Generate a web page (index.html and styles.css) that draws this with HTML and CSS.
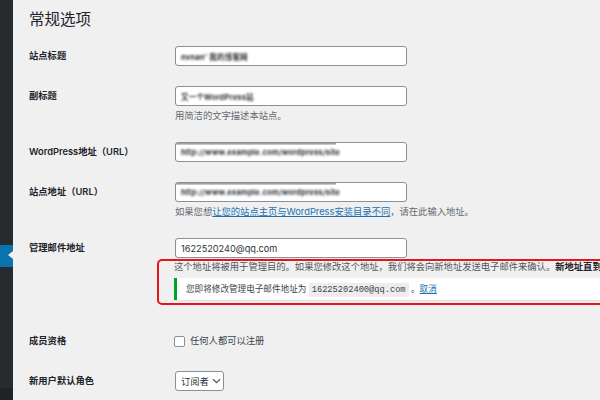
FILE: index.html
```html
<!DOCTYPE html>
<html lang="zh-CN">
<head>
<meta charset="utf-8">
<title>常规选项</title>
<link rel="stylesheet" href="styles.css">
</head>
<body>
<aside class="sidebar">
  <div class="side-top"></div>
  <div class="side-active"></div>
  <div class="side-mid"></div>
  <div class="side-bottom"></div>
</aside>
<main class="main">
  <h1 class="title">常规选项</h1>
  <div class="form">
    <div class="row">
      <div class="label">站点标题</div>
      <div class="field">
        <div class="input"><span class="blur">nvnan' 我的博客网</span></div>
      </div>
    </div>
    <div class="row">
      <div class="label">副标题</div>
      <div class="field">
        <div class="input"><span class="blur">又一个WordPress站</span></div>
        <p class="desc">用简洁的文字描述本站点。</p>
      </div>
    </div>
    <div class="row">
      <div class="label">WordPress地址（URL）</div>
      <div class="field">
        <div class="input input-url"><span class="blur">http://www.example.com/wordpress/site</span></div>
      </div>
    </div>
    <div class="row">
      <div class="label">站点地址（URL）</div>
      <div class="field">
        <div class="input input-url"><span class="blur">http://www.example.com/wordpress/site</span></div>
        <p class="desc">如果您想<a class="link" href="#">让您的站点主页与WordPress安装目录不同</a>，请在此输入地址。</p>
      </div>
    </div>
    <div class="row">
      <div class="label">管理邮件地址</div>
      <div class="field">
        <div class="input"><span class="value">1622520240@qq.com</span></div>
        <div class="highlight">
          <p class="desc desc-line">这个地址将被用于管理目的。如果您修改这个地址，我们将会向新地址发送电子邮件来确认。<strong>新地址直到获得确认后才会生效。</strong></p>
          <div class="notice">您即将修改管理电子邮件地址为 <code class="code">16225202400@qq.com</code> 。<a class="link" href="#">取消</a></div>
        </div>
      </div>
    </div>
    <div class="row row-check">
      <div class="label">成员资格</div>
      <div class="field">
        <label class="check"><span class="checkbox"></span>任何人都可以注册</label>
      </div>
    </div>
    <div class="row">
      <div class="label">新用户默认角色</div>
      <div class="field">
        <div class="select"><span class="select-text">订阅者</span><svg class="chev" width="9" height="6" viewBox="0 0 9 6"><path d="M1 1.2 L4.5 4.6 L8 1.2" fill="none" stroke="#50575e" stroke-width="1.2"/></svg></div>
      </div>
    </div>
  </div>
</main>
</body>
</html>
```
FILE: styles.css
```css
html, body {
  margin: 0;
  padding: 0;
  width: 600px;
  height: 400px;
  overflow: hidden;
}
body {
  display: flex;
  background: #f0f0f1;
  font-family: "Inter", "Noto Sans CJK SC", sans-serif;
  color: #1d2327;
}
.sidebar {
  width: 13px;
  flex: none;
  display: flex;
  flex-direction: column;
  background: #262b30;
}
.side-top { height: 245px; }
.side-active {
  height: 22px;
  background: #0a73b0;
  position: relative;
}
.side-active::after {
  content: "";
  position: absolute;
  right: 0;
  top: 6px;
  border-style: solid;
  border-width: 4.5px 5px 4.5px 0;
  border-color: transparent #f0f0f1 transparent transparent;
}
.side-mid { height: 121px; }
.side-bottom { flex: 1; background: #1f2327; }
.main {
  flex: 1;
  min-width: 0;
  padding: 9px 0 0 16px;
}
.title {
  margin: 0;
  font-size: 15.5px;
  line-height: 21px;
  font-weight: 400;
  color: #1d2327;
}
.form {
  margin-top: 6px;
}
.row {
  display: flex;
  padding: 10px 0;
}
.label {
  width: 146px;
  flex: none;
  font-size: 9.3px;
  line-height: 20px;
  font-weight: 600;
  color: #1d2327;
  white-space: nowrap;
}
.field {
  flex: 1;
  min-width: 0;
}
.input {
  box-sizing: border-box;
  width: 232px;
  height: 20px;
  border: 1px solid #8c8f94;
  border-radius: 3px;
  background: #fff;
  padding: 0 5px;
  display: flex;
  align-items: center;
  overflow: hidden;
}
.input-url {
  background-image: linear-gradient(#8d9196, #d6d8da);
  background-size: 160px 2px;
  background-repeat: no-repeat;
  background-position: left top;
}
.blur {
  display: inline-block;
  font-size: 7.5px;
  font-weight: 700;
  color: #2a2e33;
  filter: blur(0.9px);
  letter-spacing: 0.2px;
  white-space: nowrap;
}
.value {
  font-size: 9.2px;
  color: #2c3338;
  white-space: nowrap;
}
.desc {
  margin: 4px 0 0;
  font-size: 9.3px;
  line-height: 12px;
  color: #646970;
  white-space: nowrap;
}
.link {
  color: #2271b1;
  text-decoration: underline;
}
.highlight {
  box-sizing: border-box;
  width: 520px;
  margin: 1px 0 6px -18px;
  border: 2px solid #e8141b;
  border-radius: 5px;
  padding: 0 0 3px 15px;
}
.desc-line {
  margin: 0;
  line-height: 12px;
  color: #50575e;
}
.desc-line strong {
  color: #1d2327;
  font-weight: 600;
}
.notice {
  margin-top: 5px;
  height: 22px;
  box-sizing: border-box;
  background: #fff;
  border-left: 3px solid #00a32a;
  box-shadow: 0 1px 1px rgba(0,0,0,0.05);
  padding: 0 9px;
  font-size: 8.6px;
  line-height: 22px;
  color: #3c434a;
  white-space: nowrap;
}
.code {
  font-family: "Liberation Mono", "DejaVu Sans Mono", monospace;
  font-size: 8.7px;
  background: #ededee;
  padding: 2px 3px;
  color: #3c434a;
}
.check {
  display: flex;
  align-items: center;
  font-size: 9.3px;
  line-height: 20px;
  color: #3c434a;
}
.checkbox {
  box-sizing: border-box;
  width: 11px;
  height: 11px;
  border: 1px solid #8c8f94;
  border-radius: 2px;
  background: #fff;
  margin: 0 5px 0 -1px;
  flex: none;
}
.select {
  box-sizing: border-box;
  width: 49px;
  height: 20px;
  border: 1px solid #8c8f94;
  border-radius: 3px;
  background: #fff;
  display: flex;
  align-items: center;
  gap: 3px;
  padding: 0 4px 0 5px;
  font-size: 9.3px;
  color: #2c3338;
  white-space: nowrap;
}
.select-text { flex: none; }
.chev { display: block; flex: none; }
```
